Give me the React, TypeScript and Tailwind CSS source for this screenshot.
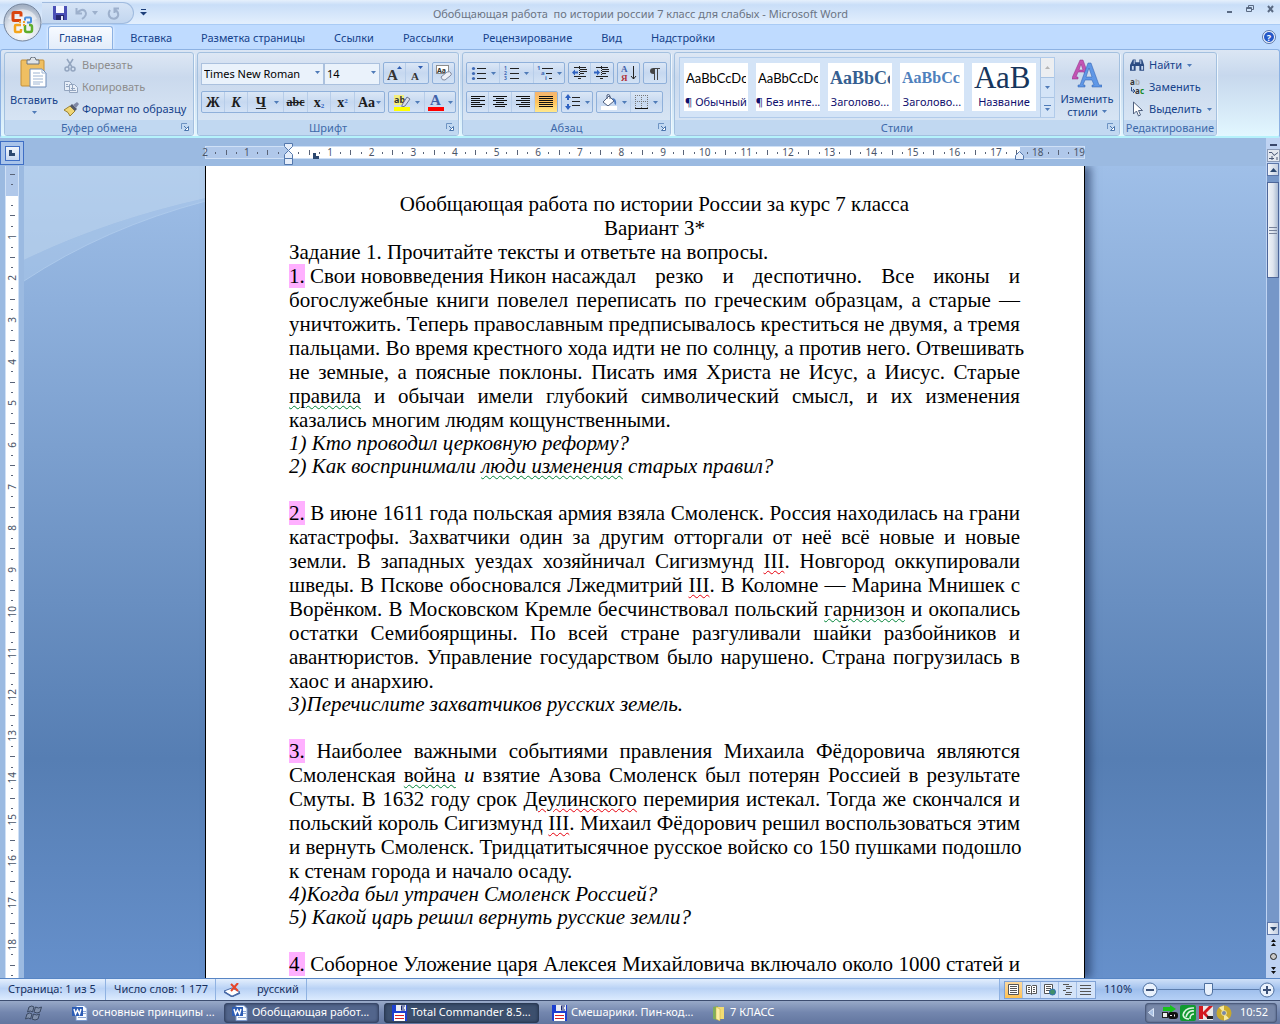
import type { ReactNode } from 'react';

const uiFont = "font-['Noto_Sans','Open_Sans',sans-serif]";

function Caret({ className = '' }: { className?: string }) {
  return (
    <svg width="5" height="3" viewBox="0 0 5 3" className={`shrink-0 ${className}`}>
      <path d="M0 0h5L2.5 3z" fill="#4f7bb8" />
    </svg>
  );
}

function Launcher() {
  return (
    <button aria-label="Параметры" className="absolute right-1 top-[3px]">
      <svg width="8" height="8" viewBox="0 0 8 8" fill="none">
        <path d="M.5 6V.5H6" stroke="#6d93c3" />
        <path d="M3 3l3 3" stroke="#4a75ad" />
        <path d="M7.5 3.5v4h-4z" fill="#fff" stroke="#4a75ad" />
      </svg>
    </button>
  );
}

function Group({ title, launcher = true, className = '', children }: { title: string; launcher?: boolean; className?: string; children: ReactNode }) {
  return (
    <section className={`flex flex-col shrink-0 rounded-[3px] border border-[#a3c0df] bg-linear-to-b from-[#dde7f4] via-[#cad9ed] via-30% to-[#dbe8f6] overflow-hidden shadow-[1px_1px_0_#eef6fd] ${className}`}>
      <div className="min-h-0 flex-1">{children}</div>
      <div className="relative h-[15px] shrink-0 bg-[#c1d8f1] text-center text-[11px] leading-[15px] text-[#3e6aaa]">
        {title}
        {launcher && <Launcher />}
      </div>
    </section>
  );
}

function Box({ children }: { children: ReactNode }) {
  return (
    <div className="flex h-[22px] shrink-0 divide-x divide-[#b7cde9] rounded-[2px] border border-[#8fb0da] bg-linear-to-b from-[#dbe7f6] via-[#c6d8f0] via-50% to-[#d3e2f5]">
      {children}
    </div>
  );
}

function Tool({ label, className = 'w-[23px]', arrow = false, children }: { label: string; className?: string; arrow?: boolean; children: ReactNode }) {
  return (
    <button aria-label={label} className={`flex items-center justify-center gap-1 ${className}`}>
      {children}
      {arrow && <Caret />}
    </button>
  );
}

// Horizontal strokes used by all of the alignment buttons
function Lines({ rows }: { rows: [number, number][] }) {
  return (
    <svg width="14" height="12" viewBox="0 0 14 12" shapeRendering="crispEdges">
      {rows.map(([x, w], i) => (
        <rect key={i} x={x} y={i * 2} width={w} height="1" fill="#111" />
      ))}
    </svg>
  );
}

function ListIcon({ kind }: { kind: 'dots' | 'numbers' | 'levels' }) {
  return (
    <svg width="16" height="16" viewBox="0 0 16 16">
      {kind === 'dots' && [3, 8, 13].map((y) => <circle key={y} cx="2.5" cy={y + 0.5} r="1.6" fill="#3f69b5" />)}
      {kind === 'numbers' && (
        <g fill="#3f69b5" fontSize="5" fontWeight="700" fontFamily="Noto Sans">
          <text x="0" y="5">1</text>
          <text x="0" y="10">2</text>
          <text x="0" y="15">3</text>
        </g>
      )}
      {kind === 'levels' ? (
        <>
          <g fill="#3f69b5" fontSize="6" fontWeight="700" fontFamily="Noto Sans">
            <text x="0" y="5">1</text>
            <text x="4" y="10">a</text>
            <text x="8" y="15">i</text>
          </g>
          <path d="M5 3.5h11M9 8.5h6M12 13.5h3" stroke="#222" />
        </>
      ) : (
        <path d="M6 3.5h9M6 8.5h9M6 13.5h9" stroke="#222" />
      )}
    </svg>
  );
}

function IndentIcon({ right = false }: { right?: boolean }) {
  return (
    <svg width="16" height="15" viewBox="0 0 16 15">
      <path d="M2 1.5h12M8 3.5h7M8 5.5h7M8 7.5h4M2 10.5h12M6 12.5h3" stroke="#222" />
      <path d="M7.5 0v14" stroke="#222" strokeDasharray="1 1" />
      <path d={right ? 'M6 6.500L3 3.500v2H0v2h3v2z' : 'M0 6.500l3-3v2h3v2H3v2z'} fill="#2f62c0" />
    </svg>
  );
}

function OfficeButton() {
  return (
    <button aria-label="Office" className="absolute left-[3px] top-[3px] z-10">
      <svg width="39" height="39" viewBox="0 0 39 39">
        <defs>
          <radialGradient id="orb" cx="50%" cy="75%" r="70%">
            <stop offset="0" stopColor="#ffffff" />
            <stop offset=".6" stopColor="#dfe5ee" />
            <stop offset="1" stopColor="#a3b0c3" />
          </radialGradient>
        </defs>
        <circle cx="19.5" cy="19.5" r="18.5" fill="url(#orb)" stroke="#75859d" />
        <path d="M5 16a15 13 0 0129 0q-14 5-29 0" fill="#fff" opacity=".45" />
        <g fill="none">
          <path d="M18 17.500h-7q-1 0-1-1v-6q0-1 1-1h6q1 0 1 1v3" stroke="#d9450f" strokeWidth="3" />
          <path d="M22 17.500v-2q0-1 1-1h4q1 0 1 1v3q0 1-1 1h-3" stroke="#4c8fdd" strokeWidth="2" />
          <path d="M18 22h-5q-1 0-1 1v5q0 1 1 1h4q1 0 1-1v-2" stroke="#f4a51c" strokeWidth="2.5" />
          <path d="M22 22v5q0 2 2 2h3q2 0 2-2v-3q0-2-2-2h-1" stroke="#5fae2c" strokeWidth="2.5" />
        </g>
        <path d="M16 18h2v2h-2zM20 18h2v2h-2zM16 21h2v2h-2zM20 21h2v2h-2z" fill="#f0a030" />
      </svg>
    </button>
  );
}

function TitleBar() {
  return (
    <header className="flex h-[25px] shrink-0 items-stretch border-b border-[#a9cbf5] bg-linear-to-b from-[#e6f0fc] via-[#c9def8] via-20% to-[#e3effd] pr-[6px]">
      <div className="ml-[42px] mt-[2px] flex h-[22px] w-[92px] items-center gap-2 rounded-r-full border border-l-0 border-[#a0bbdf] bg-linear-to-b from-[#d6e4f6] to-[#c2d6ef] pl-[11px]">
        <button aria-label="Сохранить">
          <svg width="14" height="14" viewBox="0 0 14 14">
            <path d="M0 0h14v14H1L0 13z" fill="#4a4fb5" />
            <path d="M3 0h8v7H3z" fill="#f4f6ff" />
            <path d="M3 9h8v5H3z" fill="#26286e" />
            <path d="M8 10h2v4H8z" fill="#e8ebfa" />
          </svg>
        </button>
        <button aria-label="Отменить" className="flex items-center gap-1">
          <svg width="13" height="13" viewBox="0 0 13 13" fill="none" stroke="#9db0cc" strokeWidth="2">
            <path d="M1.500 1v5.500H7M2 6q5-5 8-2 3 4-3 8" />
          </svg>
          <svg width="6" height="4" viewBox="0 0 6 4"><path d="M0 0h6L3 4z" fill="#9db0cc" /></svg>
        </button>
        <button aria-label="Повторить" className="ml-px">
          <svg width="13" height="13" viewBox="0 0 13 13" fill="none" stroke="#9db0cc" strokeWidth="2">
            <path d="M12 1.500H7.500V6M3 3q-3 5 1 8 5 2 7-2 1-4-3-6" />
          </svg>
        </button>
      </div>
      <button aria-label="Настройка панели" className="ml-[6px]">
        <svg width="7" height="7" viewBox="0 0 7 7">
          <path d="M1 .5h5" stroke="#1d3f7a" />
          <path d="M0 3h7L3.5 6.5z" fill="#1d3f7a" />
        </svg>
      </button>
      <h1 className="flex-1 pr-[92px] text-center text-[11px] leading-[27px] text-[#6b7484]">
        Обобщающая работа&nbsp; по истории россии 7 класс для слабых - Microsoft Word
      </h1>
      <div className="flex gap-[13px] pt-[5px]">
        <button aria-label="Свернуть" className="h-2">
          <svg width="7" height="8" viewBox="0 0 7 8"><path d="M1 7h5" stroke="#5a6a83" strokeWidth="2" /></svg>
        </button>
        <button aria-label="Восстановить" className="h-2">
          <svg width="8" height="8" viewBox="0 0 8 8" fill="none" stroke="#5a6a83"><path d="M2.500 2V.5h5v4H6M.5 2.500h5v4h-5zM.5 3.500h5" /></svg>
        </button>
        <button aria-label="Закрыть" className="h-2">
          <svg width="7" height="8" viewBox="0 0 7 8"><path d="M1 1l5 6M6 1L1 7" stroke="#5a6a83" strokeWidth="2" /></svg>
        </button>
      </div>
    </header>
  );
}

const tabs = ['Вставка', 'Разметка страницы', 'Ссылки', 'Рассылки', 'Рецензирование', 'Вид', 'Надстройки'];

function Tabs() {
  return (
    <nav className="flex h-6 shrink-0 items-end bg-[#bfdbff] pl-12 pr-1 text-[11px] text-[#15428b]">
      <button className="h-[23px] rounded-t-[3px] border border-b-0 border-[#8db2e3] bg-linear-to-b from-[#f7faff] to-[#e3edfa] px-[10px] shadow-[0_0_3px_#fff]">Главная</button>
      <div className="flex flex-1 gap-[29px] pl-[17px] leading-[22px]">
        {tabs.map((tab) => (
          <button key={tab}>{tab}</button>
        ))}
      </div>
      <button aria-label="Справка" className="mb-[5px]">
        <svg width="14" height="14" viewBox="0 0 14 14">
          <circle cx="7" cy="7" r="6.5" fill="#f2f7ff" stroke="#5b76a6" />
          <circle cx="7" cy="7" r="5" fill="#2458c8" />
          <text x="7" y="10.5" textAnchor="middle" fontSize="9" fontWeight="700" fill="#fff" fontFamily="Noto Sans">?</text>
        </svg>
      </button>
    </nav>
  );
}

function Clipboard() {
  return (
    <Group title="Буфер обмена" className="w-[190px]">
      <div className="flex text-[11px]">
        <button className="flex w-[58px] flex-col items-center pt-1 leading-4 text-[#15428b]">
          <svg width="28" height="32" viewBox="0 0 28 32" className="mb-[3px]">
            <rect x="1" y="3" width="23" height="26" rx="1" fill="#efbf62" stroke="#c48f36" />
            <path d="M7 3h3q0-3 3-3t3 3h3v4H7z" fill="#dfe4ea" stroke="#6b7480" />
            <path d="M10 12h12l4 4v14H10z" fill="#fff" stroke="#6c8bb9" />
            <path d="M22 12v4h4M13 16h7M13 19h10M13 22h10M13 25h10M13 27h7" stroke="#9db4d3" fill="none" />
          </svg>
          Вставить
          <Caret className="mt-[3px]" />
        </button>
        <div className="flex flex-col items-start pl-px pt-px leading-[22px] text-[#8d8d8d]">
          <button className="flex items-center gap-[6px]">
            <svg width="12" height="14" viewBox="0 0 12 14" fill="none" stroke="#93a5bf" strokeWidth="1.5">
              <path d="M3 1l5 8M9 1L4 9" />
              <circle cx="3" cy="11" r="2" />
              <circle cx="9" cy="11" r="2" />
            </svg>
            Вырезать
          </button>
          <button className="flex items-center gap-1">
            <svg width="14" height="12" viewBox="0 0 14 12" fill="#e7eef8" stroke="#93a5bf">
              <path d="M.5.5h5l3 3v6h-8zM5.500 3.500h5l3 3v5h-8z" />
              <path d="M7 7.500h4M7 9.500h5M2 3.500h2M2 5.500h3" />
            </svg>
            Копировать
          </button>
          <button className="flex items-center gap-[3px] text-[#15428b]">
            <svg width="15" height="14" viewBox="0 0 15 14">
              <path d="M0 8l6-4 5 5-5 5q-1-4-6-6z" fill="#f0d676" stroke="#9a8130" />
              <path d="M6 4l2-2 5 5-2 2z" fill="#52586a" />
              <path d="M9 3l4-3 2 2-3 4z" fill="#7f88a5" />
            </svg>
            Формат по образцу
          </button>
        </div>
      </div>
    </Group>
  );
}

function Combo({ label, value, className }: { label: string; value: string; className: string }) {
  return (
    <label className={`relative block h-[22px] ${className}`}>
      <select aria-label={label} className="h-full w-full appearance-none border border-[#abc1de] bg-[#eaf2fb] pl-[2px] text-[11px] text-black">
        <option>{value}</option>
      </select>
      <Caret className="pointer-events-none absolute right-1 top-[9px]" />
    </label>
  );
}

function FontGroup() {
  return (
    <Group title="Шрифт" className="w-[262px]">
      <div className="flex flex-col gap-[7px] pl-[3px] pt-[9px] font-['Liberation_Serif',serif] text-[14px] text-[#1c1c1c]">
        <div className={`flex gap-[3px] ${uiFont}`}>
          <div className="flex">
            <Combo label="Шрифт" value="Times New Roman" className="w-[123px]" />
            <Combo label="Размер" value="14" className="w-14" />
          </div>
          <Box>
            <Tool label="Увеличить размер" className="w-[22px]">
              <svg width="16" height="16" viewBox="0 0 16 16" fontFamily="Liberation Serif">
                <text x="0" y="15" fontSize="15" fontWeight="700" fill="#333">A</text>
                <path d="M10 4h5l-2.500-3z" fill="#2f5db0" />
              </svg>
            </Tool>
            <Tool label="Уменьшить размер" className="w-[22px]">
              <svg width="16" height="16" viewBox="0 0 16 16" fontFamily="Liberation Serif">
                <text x="2" y="15" fontSize="11" fontWeight="700" fill="#333">A</text>
                <path d="M9 1h5l-2.500 3z" fill="#2f5db0" />
              </svg>
            </Tool>
          </Box>
          <Box>
            <Tool label="Очистить формат" className="w-[21px]">
              <svg width="16" height="16" viewBox="0 0 16 16">
                <rect x=".5" y=".5" width="12" height="8" fill="#fff" stroke="#8c8c8c" />
                <text x="1" y="7.5" fontSize="7" fontWeight="700" fill="#333">Aa</text>
                <path d="M5 12l6-5q3-1 4 1t-1 3l-5 4q-3 1-4-3z" fill="#eef0f7" stroke="#8189a0" />
              </svg>
            </Tool>
          </Box>
        </div>
        <div className="flex gap-[3px]">
          <Box>
            <Tool label="Полужирный"><b>Ж</b></Tool>
            <Tool label="Курсив"><b className="italic">К</b></Tool>
            <Tool label="Подчеркнутый" className="w-9 pl-1" arrow><b className="mr-1 underline">Ч</b></Tool>
            <Tool label="Зачеркнутый" className="w-6"><b className="text-[12px] line-through">abc</b></Tool>
            <Tool label="Подстрочный">
              <b>x<sub className="text-[7px] text-[#2f62c0]">2</sub></b>
            </Tool>
            <Tool label="Надстрочный" className="w-6">
              <b>x<sup className="text-[7px] text-[#2f62c0]">2</sup></b>
            </Tool>
            <button aria-label="Регистр" className="flex w-[29px] items-center justify-center gap-px"><b>Aa</b><Caret /></button>
          </Box>
          <Box>
            <Tool label="Цвет выделения" className="w-9" arrow>
              <svg width="17" height="17" viewBox="0 0 17 17">
                <rect x="0" y="1" width="10" height="10" fill="#f3ee7c" />
                <text x="0" y="9" fontSize="9" fontWeight="700" fill="#333" fontFamily="Noto Sans">ab</text>
                <path d="M8 11l5-8 3 2-5 7-3 1z" fill="#d8dce8" stroke="#6b7694" />
                <rect y="13" width="16" height="4" fill="#ffff00" />
              </svg>
            </Tool>
            <Tool label="Цвет текста" className="w-[30px]" arrow>
              <svg width="16" height="17" viewBox="0 0 16 17">
                <text x="2" y="11" fontSize="15" fontWeight="700" fill="#3f61a8">A</text>
                <rect y="13" width="16" height="4" fill="#ff0000" />
              </svg>
            </Tool>
          </Box>
        </div>
      </div>
    </Group>
  );
}

function ParagraphGroup() {
  return (
    <Group title="Абзац" className="w-[209px]">
      <div className="flex flex-col gap-[7px] pl-[3px] pt-[9px]">
        <div className="flex gap-[3px]">
          <Box>
            <Tool label="Маркеры" className="w-[33px]" arrow><ListIcon kind="dots" /></Tool>
            <Tool label="Нумерация" className="w-[34px]" arrow><ListIcon kind="numbers" /></Tool>
            <Tool label="Многоуровневый список" className="w-[30px]" arrow><ListIcon kind="levels" /></Tool>
          </Box>
          <Box>
            <Tool label="Уменьшить отступ" className="w-[22px]"><IndentIcon /></Tool>
            <Tool label="Увеличить отступ" className="w-[22px]"><IndentIcon right /></Tool>
          </Box>
          <Box>
            <Tool label="Сортировка" className="w-[21px]">
              <svg width="16" height="18" viewBox="0 0 16 18">
                <text x="0" y="8" fontSize="9" fontWeight="700" fill="#3f61a8" fontFamily="Liberation Serif">А</text>
                <text x="0" y="17" fontSize="9" fontWeight="700" fill="#b0343c" fontFamily="Liberation Serif">Я</text>
                <path d="M12.500 2v13M10 12l2.500 3 2.500-3" stroke="#222" fill="none" />
              </svg>
            </Tool>
          </Box>
          <Box>
            <Tool label="Знаки абзаца" className="w-[22px]">
              <svg width="12" height="13" viewBox="0 0 12 13">
                <path d="M5.500 1v12M8.500 1v12M5 1.500h6" stroke="#444" fill="none" />
                <path d="M6 1H4.500q-3.500 0-3.500 3t3.500 3H6z" fill="#444" />
              </svg>
            </Tool>
          </Box>
        </div>
        <div className="flex gap-[3px]">
          <Box>
            <Tool label="По левому краю" className="w-[22px]"><Lines rows={[[0, 14], [0, 9], [0, 14], [0, 9], [0, 14], [0, 11]]} /></Tool>
            <Tool label="По центру"><Lines rows={[[0, 14], [3, 8], [0, 14], [3, 8], [0, 14], [2, 10]]} /></Tool>
            <Tool label="По правому краю"><Lines rows={[[0, 14], [5, 9], [0, 14], [5, 9], [0, 14], [3, 11]]} /></Tool>
            <Tool label="По ширине" className="w-[22px] bg-linear-to-b from-[#f5b570] via-[#ffc45c] to-[#ffe88c]">
              <Lines rows={[[0, 14], [0, 14], [0, 14], [0, 14], [0, 14], [0, 14]]} />
            </Tool>
          </Box>
          <Box>
            <Tool label="Интервал" className="w-[30px]" arrow>
              <svg width="16" height="16" viewBox="0 0 16 16">
                <path d="M3 0l3 4H4v2H2V4H0zM3 16l3-4H4v-2H2v2H0z" fill="#2f62c0" />
                <path d="M7 3.500h8M7 7.500h8M7 11.500h8" stroke="#222" />
              </svg>
            </Tool>
          </Box>
          <Box>
            <Tool label="Заливка" className="w-[34px]" arrow>
              <svg width="17" height="16" viewBox="0 0 17 16">
                <path d="M2 8l6-6 5 5-6 5z" fill="#fff" stroke="#51607e" />
                <path d="M6 5V1q2-2 3 1v3" stroke="#51607e" fill="none" />
                <path d="M11 4q5 0 4 7-2-1-2-4z" fill="#4d7cc4" />
                <rect y="12" width="16" height="4" fill="#fff" />
              </svg>
            </Tool>
            <Tool label="Границы" className="w-[31px]" arrow>
              <svg width="14" height="14" viewBox="0 0 14 14" stroke="#777" fill="none">
                <path d="M.5 0v13M6.500 0v13M12.500 0v13M0 .5h13M0 6.500h13" strokeDasharray="1 1" />
                <path d="M0 13.500h13" stroke="#111" />
              </svg>
            </Tool>
          </Box>
        </div>
      </div>
    </Group>
  );
}

const styleTiles = [
  { name: '¶ Обычный', sample: 'AaBbCcDc', look: "font-['Lato',sans-serif] text-[13px] text-black" },
  { name: '¶ Без инте...', sample: 'AaBbCcDc', look: "font-['Lato',sans-serif] text-[13px] text-black" },
  { name: 'Заголово...', sample: 'AaBbCc', look: "font-['Liberation_Serif',serif] text-[18px] font-bold text-[#365f91]" },
  { name: 'Заголово...', sample: 'AaBbCc', look: "font-['Liberation_Serif',serif] text-[16px] font-bold text-[#4f81bd]" },
  { name: 'Название', sample: 'АаВ', look: "font-['Liberation_Serif',serif] text-[31px] text-[#17365d]" },
];

function StylesGroup() {
  return (
    <Group title="Стили" className="w-[446px]">
      <div className="flex pl-1 pt-1">
        <div className="flex h-[61px] border border-[#b1cbea] bg-[#d4e4f7]">
          <div className="flex gap-2 px-1 pt-[5px]">
            {styleTiles.map((tile, i) => (
              <button key={i} className="flex h-12 w-16 flex-col items-center overflow-hidden bg-white">
                <span className={`h-[31px] w-[60px] overflow-hidden whitespace-nowrap text-left leading-[30px] ${tile.look}`}>{tile.sample}</span>
                <span className="whitespace-nowrap text-[11px] leading-4 text-[#10106e]">{tile.name}</span>
              </button>
            ))}
          </div>
          <div className="flex w-[14px] flex-col divide-y divide-[#a9c3e2] border-l border-[#a9c3e2]">
            <button aria-label="Вверх" className="flex flex-1 items-center justify-center bg-[#eceef1]">
              <svg width="5" height="3" viewBox="0 0 5 3"><path d="M0 3h5L2.500 0z" fill="#b5b5b5" /></svg>
            </button>
            <button aria-label="Вниз" className="flex flex-1 items-center justify-center"><Caret /></button>
            <button aria-label="Дополнительно" className="flex flex-1 flex-col items-center justify-center gap-[2px]">
              <span className="h-px w-[7px] bg-[#4f7bb8]" />
              <Caret />
            </button>
          </div>
        </div>
        <button className="flex flex-1 flex-col items-center pt-[2px] text-[11px] leading-[13px] text-[#15428b]">
          <svg width="30" height="29" viewBox="0 0 30 29" className="mb-1">
            <path d="M0 19l8-18h3l4 11-2 3-1-2H6l-2 5h2v2H0zM7 11h4L9 5z" fill="#c254b4" stroke="#8f2f85" strokeWidth=".5" />
            <path d="M6 28v-2h2L16 4h3l8 22h3v2H20v-2h2l-2-5h-7l-2 5h2v2zM14 18h6l-3-9z" fill="#5f97e6" stroke="#2c5cae" strokeWidth=".5" />
          </svg>
          Изменить
          <span className="flex items-center gap-1">стили <Caret /></span>
        </button>
      </div>
    </Group>
  );
}

function EditingGroup() {
  return (
    <Group title="Редактирование" launcher={false} className="w-[94px]">
      <div className="flex flex-col items-start pl-[6px] pt-px text-[11px] leading-[22px] text-[#15428b]">
        <button className="flex items-center gap-1">
          <svg width="15" height="14" viewBox="0 0 16 14">
            <path d="M3 1h3v3h4V1h3l2 6v6h-5V8H6v5H0V7z" fill="#2b4b82" />
            <path d="M2 8h2v4H2zM12 8h2v4h-2zM4 2h1v4H4zM11 2h1v4h-1z" fill="#c5d6f0" />
          </svg>
          Найти <Caret className="ml-px" />
        </button>
        <button className="flex items-center gap-1">
          <svg width="15" height="16" viewBox="0 0 15 16" fontFamily="Noto Sans" fontSize="8" fontWeight="700">
            <text x="0" y="6" fill="#333">a</text>
            <text x="5" y="6" fill="#aaa">b</text>
            <text x="5" y="15" fill="#333">a</text>
            <text x="10" y="15" fill="#168a1e">c</text>
            <path d="M1.500 8v4h3M3 10l2 2-2 2" stroke="#2f4f8a" fill="none" />
          </svg>
          Заменить
        </button>
        <button className="flex items-center gap-1">
          <svg width="15" height="16" viewBox="0 0 15 16">
            <path d="M3.500 1v12l3-3 2 5 2-1-2-4.500h4z" fill="#fff" stroke="#50617f" />
          </svg>
          Выделить <Caret className="ml-px" />
        </button>
      </div>
    </Group>
  );
}

// Ruler marks come every quarter of a centimetre: dot, bar, dot, number
function mark(step: number) {
  const r = Math.abs(step) % 4;
  if (step === 0) return '';
  if (r === 0) return String(Math.abs(step) / 4);
  return r === 2 ? '|' : '.';
}

function Mark({ value, vertical = false }: { value: string; vertical?: boolean }) {
  if (value === '|') return <i className={vertical ? 'h-px w-[5px] bg-[#5a6478]' : 'h-[5px] w-px bg-[#5a6478]'} />;
  if (value === '.') return <i className={vertical ? 'h-px w-[2px] bg-[#5a6478]' : 'h-[2px] w-px bg-[#5a6478]'} />;
  return <span className={`whitespace-nowrap ${vertical ? 'rotate-180 [writing-mode:vertical-rl]' : ''}`}>{value}</span>;
}

function HorizontalRuler() {
  const steps = Array.from({ length: 85 }, (_, i) => i - 8);
  return (
    <div className="flex h-[28px] shrink-0 bg-[#9bbae1]">
      <button aria-label="Тип табуляции" className="mb-px mt-[3px] flex w-6 items-center justify-center border border-[#3f6fc5] bg-[#a9c4ea]">
        <span className="flex size-[15px] items-center justify-center border border-[#3f6fc5] bg-linear-to-b from-[#f2f6fc] to-[#c5d6f0]">
          <i className="size-[6px] border-b-[3px] border-l-[3px] border-[#2c4870]" />
        </span>
      </button>
      <div className="flex flex-1 items-center justify-center pt-px">
        <div className="relative flex h-[13px] w-[880px] items-center border border-[#cfe0f6] bg-[linear-gradient(90deg,#b0c8ea_83px,#fff_83px,#fff_814px,#b0c8ea_814px)] text-[10px] leading-[13px] text-[#4a5468]">
          <div className="-ml-[6px] flex flex-1">
            {steps.map((s) => (
              <div key={s} className="flex h-[13px] w-0 flex-1 items-center justify-center"><Mark value={mark(s)} /></div>
            ))}
          </div>
          <svg width="9" height="22" viewBox="0 0 9 22" className="absolute -top-[4px] left-[78px]" fill="#e6eefa" stroke="#5478ad">
            <path d="M.5.5h8v3l-4 4-4-4zM.5 15.500v-4l4-4 4 4v4zM.5 15.500h8v6h-8z" />
          </svg>
          <svg width="9" height="9" viewBox="0 0 9 9" className="absolute left-[809px] top-[4px]" fill="#e6eefa" stroke="#5478ad">
            <path d="M.5 8.500v-4l4-4 4 4v4z" />
          </svg>
          <i className="absolute left-[107px] top-[6px] size-[6px] border-b-[3px] border-l-[3px] border-[#2c4870]" />
        </div>
      </div>
    </div>
  );
}

function VerticalRuler() {
  const steps = Array.from({ length: 78 }, (_, i) => i - 2);
  return (
    <div className="w-6 shrink-0 overflow-hidden bg-[#9bbae1] pl-[5px]">
      <div className="h-[816px] w-[14px] border-x border-[#cfe0f6] bg-[linear-gradient(180deg,#b0c8ea_30px,#fff_30px)] pt-[3px] text-[10px] leading-[12px] text-[#4a5468]">
        <div className="flex h-[812px] flex-col">
          {steps.map((s) => (
            <div key={s} className="flex h-0 flex-1 items-center justify-center"><Mark value={mark(s)} vertical /></div>
          ))}
        </div>
      </div>
    </div>
  );
}

function Line({ last = false, center = false, children }: { last?: boolean; center?: boolean; children: ReactNode }) {
  const align = center ? 'text-center' : last ? 'text-left' : 'text-justify [text-align-last:justify]';
  return <p className={`h-6 whitespace-nowrap leading-6 ${align}`}>{children}</p>;
}

function Question({ children }: { children?: ReactNode }) {
  return <p className="h-[23px] whitespace-nowrap italic leading-[23px]">{children}</p>;
}

function Num({ children }: { children: ReactNode }) {
  return <span className="bg-[#ffb0ff]">{children}</span>;
}

function Grammar({ children }: { children: ReactNode }) {
  return <span className="underline decoration-green-700 decoration-wavy decoration-1 underline-offset-2">{children}</span>;
}

function Spelling({ children }: { children: ReactNode }) {
  return <span className="underline decoration-red-600 decoration-wavy decoration-1 underline-offset-2">{children}</span>;
}

function Page() {
  return (
    <article className="mx-auto w-[880px] shrink-0 border-x border-black bg-white pl-[83px] pr-[64px] pt-[26px] font-['Liberation_Serif',serif] text-[21px] text-black shadow-[6px_0_8px_rgba(30,50,90,0.6)]">
      <Line center>Обобщающая работа по истории России за курс 7 класса</Line>
      <Line center>Вариант 3*</Line>
      <Line last>Задание 1. Прочитайте тексты и ответьте на вопросы.</Line>
      <Line><span className="inline-block"><Num>1.</Num> Свои нововведения Никон насаждал</span> резко и деспотично. Все иконы и</Line>
      <Line>богослужебные книги повелел переписать по греческим образцам, а старые —</Line>
      <Line>уничтожить. Теперь православным предписывалось креститься не двумя, а тремя</Line>
      <Line>пальцами. Во время крестного хода идти не по солнцу, а против него. Отвешивать</Line>
      <Line>не земные, а поясные поклоны. Писать имя Христа не Исус, а Иисус. Старые</Line>
      <Line><Grammar>правила</Grammar> и обычаи имели глубокий символический смысл, и их изменения</Line>
      <Line last>казались многим людям кощунственными.</Line>
      <Question>1) Кто проводил церковную реформу?</Question>
      <Question>2) Как воспринимали <Grammar>люди изменения</Grammar> старых правил?</Question>
      <Question />
      <Line><Num>2.</Num> В июне 1611 года польская армия взяла Смоленск. Россия находилась на грани</Line>
      <Line>катастрофы. Захватчики один за другим отторгали от неё всё новые и новые</Line>
      <Line>земли. В западных уездах хозяйничал Сигизмунд <Spelling>III</Spelling>. Новгород оккупировали</Line>
      <Line>шведы. В Пскове обосновался Лжедмитрий <Spelling>III</Spelling>. В Коломне — Марина Мнишек с</Line>
      <Line>Ворёнком. В Московском Кремле бесчинствовал польский <Grammar>гарнизон</Grammar> и окопались</Line>
      <Line>остатки Семибоярщины. По всей стране разгуливали шайки разбойников и</Line>
      <Line>авантюристов. Управление государством было нарушено. Страна погрузилась в</Line>
      <Line last>хаос и анархию.</Line>
      <Question>3)Перечислите захватчиков русских земель.</Question>
      <Question />
      <Line><Num>3.</Num> Наиболее важными событиями правления Михаила Фёдоровича являются</Line>
      <Line>Смоленская <Grammar>война</Grammar> <em>и</em> взятие Азова Смоленск был потерян Россией в результате</Line>
      <Line>Смуты. В 1632 году срок <Spelling>Деулинского</Spelling> перемирия истекал. Тогда же скончался и</Line>
      <Line>польский король Сигизмунд <Spelling>III</Spelling>. Михаил Фёдорович решил воспользоваться этим</Line>
      <Line>и вернуть Смоленск. Тридцатитысячное русское войско со 150 пушками подошло</Line>
      <Line last>к стенам города и начало осаду.</Line>
      <Question>4)Когда был утрачен Смоленск Россией?</Question>
      <Question>5) Какой царь решил вернуть русские земли?</Question>
      <Question />
      <Line><Num>4.</Num> Соборное Уложение царя Алексея Михайловича включало около 1000 статей и</Line>
    </article>
  );
}

function ScrollButton({ label, d }: { label: string; d: string }) {
  return (
    <button aria-label={label} className="flex h-[13px] w-3 items-center justify-center border border-[#5c76a8] bg-linear-to-r from-[#f2f5fa] to-[#c5d0e0]">
      <svg width="7" height="4" viewBox="0 0 7 4"><path d={d} fill="#2c4870" /></svg>
    </button>
  );
}

function ScrollBar() {
  return (
    <div className="flex w-[14px] shrink-0 flex-col items-center bg-[#bfd3f2]">
      <div className="mb-[3px] mt-[6px] h-[2px] w-[7px] bg-[#39486a]" />
      <button aria-label="Линейка" className="mb-px h-[13px] w-[13px] border border-[#8c9cb8] bg-[#e3e8f0]">
        <svg width="11" height="11" viewBox="0 0 11 11" stroke="#4c5a78" fill="none"><path d="M1 2.500h3l2 3 4-3M1 8.500h5M4 6v4M9 7v3" /></svg>
      </button>
      <ScrollButton label="Вверх" d="M0 4h7L3.5 0z" />
      <div className="flex w-3 flex-1 flex-col bg-[#7697c8] pt-[6px]">
        <div className="flex h-24 flex-col items-center justify-center gap-[2px] border border-[#4d6699] bg-linear-to-r from-[#eef2f7] via-[#dfe5ee] to-[#a9bad2]">
          <i className="h-px w-2 bg-[#77829a]" />
          <i className="h-px w-2 bg-[#77829a]" />
          <i className="h-px w-2 bg-[#77829a]" />
        </div>
      </div>
      <ScrollButton label="Вниз" d="M0 0h7L3.5 4z" />
      <div className="flex h-[43px] flex-col items-center justify-around">
        <button aria-label="Предыдущая страница"><svg width="5" height="7" viewBox="0 0 5 7"><path d="M0 3l2.500-3L5 3zM0 7l2.500-3L5 7z" fill="#111" /></svg></button>
        <button aria-label="Выбор объекта перехода"><svg width="7" height="7" viewBox="0 0 7 7"><circle cx="3.5" cy="3.5" r="3" fill="#c9c9c9" stroke="#222" /></svg></button>
        <button aria-label="Следующая страница"><svg width="5" height="7" viewBox="0 0 5 7"><path d="M0 0h5L2.500 3zM0 4h5L2.500 7z" fill="#111" /></svg></button>
      </div>
    </div>
  );
}

function ZoomButton({ label, plus = false }: { label: string; plus?: boolean }) {
  return (
    <button aria-label={label}>
      <svg width="16" height="16" viewBox="0 0 16 16">
        <circle cx="8" cy="8" r="7" fill="#e9f1fc" stroke="#4d6f9f" />
        <path d={plus ? 'M4 8h8M8 4v8' : 'M4 8h8'} stroke="#3d5278" strokeWidth="2" />
      </svg>
    </button>
  );
}

const viewIcons = [
  'M.5.5h10v10H.5zM2 2.500h7M2 4.500h7M2 6.500h7M2 8.500h7',
  'M.5 1.500h4l1 1 1-1h4v8h-4l-1 1-1-1h-4zM5.500 2v8M2 3.500h2M2 5.500h2M2 7.500h2M7 3.500h2M7 5.500h2M7 7.500h2',
  'M.5.5h8v9h-8zM2 2.500h5M2 4.500h5M2 6.500h5',
  'M1 .5h6M4 2.500h6M4 4.500h4M1 6.500h3M4 8.500h6M3 10.500h6',
  'M0 1.500h11M0 4.500h11M0 7.500h11M0 10.500h11',
];

function StatusBar() {
  const cell = 'flex h-full items-center border-r border-[#8fb2e2]';
  return (
    <footer className="flex h-[22px] shrink-0 items-center border-t border-[#5785c4] bg-linear-to-b from-[#e4effd] via-[#b9d2f5] via-45% to-[#dcebfe] text-[11px] text-[#15305f]">
      <div className={`${cell} w-[106px] pl-2`}>Страница: 1 из 5</div>
      <div className={`${cell} w-[110px] pl-2`}>Число слов: 1 177</div>
      <div className={`${cell} w-[91px] gap-4 pl-2`}>
        <svg width="17" height="14" viewBox="0 0 17 14">
          <path d="M0 8l8-3 8 4-8 5z" fill="#fff" stroke="#4769a6" />
          <path d="M0 9l8 4.500L16 10" stroke="#4769a6" strokeWidth="1.5" fill="none" />
          <path d="M7 1l7 7M14 0L7 8" stroke="#e6452a" strokeWidth="2" />
        </svg>
        русский
      </div>
      <div className="h-full flex-1 border-r border-[#8fb2e2]" />
      <div className="flex h-full items-center bg-linear-to-b from-[#cfe0f8] via-[#9fbfec] via-50% to-[#b5d0f6] pl-1 pr-[5px]">
        <div className="flex h-[18px] divide-x divide-[#a4bfe6] border border-[#7fa2d6] bg-[#d3e3f9]">
          {viewIcons.map((d, i) => (
            <button key={d} aria-label={`Режим ${i + 1}`} className={`flex w-[18px] items-center justify-center ${i === 0 ? 'bg-linear-to-b from-[#fbd9a0] to-[#ffc14f]' : ''}`}>
              <svg width="12" height="12" viewBox="0 0 12 12" fill={i < 3 ? '#fff' : 'none'} stroke="#555">
                <path d={d} />
                {i === 2 && <circle cx="8.500" cy="8" r="3" fill="#3f8f6a" stroke="#2f6fb0" />}
              </svg>
            </button>
          ))}
        </div>
        <span className="w-[46px] pl-2">110%</span>
        <ZoomButton label="Уменьшить" />
        <input
          type="range"
          aria-label="Масштаб"
          defaultValue={50}
          className="h-4 w-[101px] appearance-none bg-[linear-gradient(#5c7dad,#5c7dad)] bg-[length:100%_1px] bg-center bg-no-repeat [&::-webkit-slider-thumb]:h-[13px] [&::-webkit-slider-thumb]:w-[9px] [&::-webkit-slider-thumb]:appearance-none [&::-webkit-slider-thumb]:rounded-b-[4px] [&::-webkit-slider-thumb]:border [&::-webkit-slider-thumb]:border-[#4d6f9f] [&::-webkit-slider-thumb]:bg-[#e9f1fc]"
        />
        <ZoomButton label="Увеличить" plus />
      </div>
    </footer>
  );
}

function WordIcon() {
  return (
    <svg width="16" height="16" viewBox="0 0 16 16">
      <path d="M4 .5h8l3 3v12H4z" fill="#f7fbff" stroke="#7b97c9" />
      <path d="M11 6.500h3M11 8.500h3M6 12.500h8" stroke="#8ba6d4" />
      <rect y="2" width="11" height="9" fill="#2d5db5" />
      <path d="M2 4l1.500 5L5.500 5l2 4L9 4" stroke="#fff" strokeWidth="1.5" fill="none" />
    </svg>
  );
}

function FloppyIcon() {
  return (
    <svg width="15" height="16" viewBox="0 0 15 16">
      <path d="M0 0h15v16H1l-1-1z" fill="#1c3fd0" />
      <path d="M4 0h10v6H4z" fill="#e9ecf5" />
      <path d="M9 1h4M9 3h3M9 5h4M9.500 1v4" stroke="#1c2a70" />
      <path d="M2 8h11v8H2z" fill="#fff" />
      <path d="M3 10.500h9M3 13.500h9" stroke="#d22" />
    </svg>
  );
}

function FolderIcon() {
  return (
    <svg width="14" height="16" viewBox="0 0 14 16">
      <path d="M1 2l5-1v14l-5-1z" fill="#7fae5c" />
      <path d="M4 2h8v12H4z" fill="#f2dc72" />
      <path d="M4 2l4 2v12l-4-2z" fill="#fbf0a6" stroke="#c7a93a" strokeWidth=".5" />
    </svg>
  );
}

const tasks = [
  { title: 'основные принципы ...', icon: <WordIcon />, look: '' },
  { title: 'Обобщающая работ...', icon: <WordIcon />, look: 'bg-[#52658c] shadow-[inset_0_0_3px_1px_#2c3a58]' },
  { title: 'Total Commander 8.5...', icon: <FloppyIcon />, look: 'bg-[#3c4f6d] shadow-[inset_0_0_3px_1px_#22304a]' },
  { title: 'Смешарики. Пин-код...', icon: <FloppyIcon />, look: '' },
  { title: '7 КЛАСС', icon: <FolderIcon />, look: '' },
];

function TaskBar() {
  return (
    <div className="flex h-6 shrink-0 items-center border-t border-[#3d4d70] bg-linear-to-b from-[#98a9c8] via-[#7386ae] via-50% to-[#62769f] pr-[3px] text-[11px] text-white">
      <button aria-label="Пуск" className="flex w-16 pl-6">
        <svg width="19" height="16" viewBox="0 0 19 16" fill="#8090ac" stroke="#3b4962">
          <path d="M5 2q3-2 5 0L8.500 7q-2-2-5 0zM11.500 2q3 2 6 0L16 7q-3 2-6 0zM3 9q3-2 5 0l-1.500 5q-2-2-5 0zM9.500 9q3 2 6 0L14 14q-3 2-6 0z" />
        </svg>
      </button>
      <div className="flex flex-1 gap-[5px]">
        {tasks.map((task) => (
          <button key={task.title} className={`flex h-5 w-[155px] items-center gap-1 whitespace-nowrap rounded-[4px] pl-2 ${task.look}`}>
            {task.icon}
            {task.title}
          </button>
        ))}
      </div>
      <div className="flex h-5 w-[132px] items-center gap-[2px] rounded-[4px] bg-[#7787a8] pl-[3px] shadow-[inset_0_0_2px_1px_#3f4e6e]">
        <svg width="6" height="9" viewBox="0 0 6 9" className="mr-[6px]"><path d="M5.500.5v8l-5-4z" fill="#a9c0e2" stroke="#dbe7f8" /></svg>
        <svg width="16" height="16" viewBox="0 0 16 16">
          <path d="M1 2h7V0l6 4-6 4V6H1z" fill="#18c21c" />
          <rect x="0.5" y="7.5" width="5" height="5" fill="#eee" stroke="#222" />
          <rect x="6" y="7" width="10" height="7" rx="3" fill="#111" />
          <path d="M8 10.500h2M12.500 9.500v2" stroke="#eee" />
        </svg>
        <svg width="16" height="16" viewBox="0 0 16 16">
          <rect width="16" height="16" rx="2" fill="#129a31" />
          <path d="M14 3Q5 2 3 10M14 6q-6-1-8 6M14 9q-4 0-4 5M3 10q1 4 6 4" stroke="#dff5e2" strokeWidth="1.5" fill="none" />
        </svg>
        <svg width="16" height="16" viewBox="0 0 16 16">
          <rect width="14" height="14" x="1" y="1" fill="#e9e9e9" />
          <path d="M1 1h4v6l6-6h4L8 8l4 5H9L5 9v5H1z" fill="#d3191f" />
          <path d="M9 11h6v3H9z" fill="#222" />
        </svg>
        <svg width="16" height="16" viewBox="0 0 16 16">
          <circle cx="8" cy="8" r="7.5" fill="#c9a92d" />
          <path d="M8 8L3 2.500 8 .5zM8 8l5 5.500-5 2z" fill="#f7eaa0" />
          <circle cx="8" cy="8" r="2.5" fill="#7787a8" stroke="#f0e090" />
        </svg>
        <time className="pl-[6px]">10:52</time>
      </div>
    </div>
  );
}

export default function App() {
  return (
    <div className={`relative flex h-screen flex-col overflow-hidden bg-[#bfdbff] ${uiFont}`}>
      <OfficeButton />
      <TitleBar />
      <Tabs />
      <div className="flex h-[89px] shrink-0 gap-[3px] overflow-hidden rounded-[3px] border border-b-2 border-[#8db2e3] border-b-[#b5f2fb] bg-linear-to-b from-[#dbe6f4] via-[#c7d8ed] via-30% to-[#e2f7ff] pl-[3px] pt-[2px]">
        <Clipboard />
        <FontGroup />
        <ParagraphGroup />
        <StylesGroup />
        <EditingGroup />
      </div>
      <main className="flex min-h-0 flex-1">
        <div className="flex min-w-0 flex-1 flex-col">
          <HorizontalRuler />
          <div className="flex min-h-0 flex-1">
            <VerticalRuler />
            <div className="relative flex min-w-0 flex-1 overflow-hidden bg-linear-to-b from-[#9fbfe8] via-[#567eb3] via-73% to-[#6690cb]">
              <svg className="absolute left-0 top-0" width="182" height="120" viewBox="0 0 182 120">
                <path d="M0 0h182v32Q80 55 0 94z" fill="#c5dbf0" opacity=".55" />
                <path d="M0 94Q80 55 182 32v3Q80 62 0 115z" fill="#b4cfee" opacity=".4" />
                <path d="M0 115Q80 62 182 35" stroke="#b4cfee" fill="none" opacity=".7" />
              </svg>
              <div className="relative mx-auto flex">
                <Page />
              </div>
            </div>
          </div>
        </div>
        <ScrollBar />
      </main>
      <StatusBar />
      <TaskBar />
    </div>
  );
}
